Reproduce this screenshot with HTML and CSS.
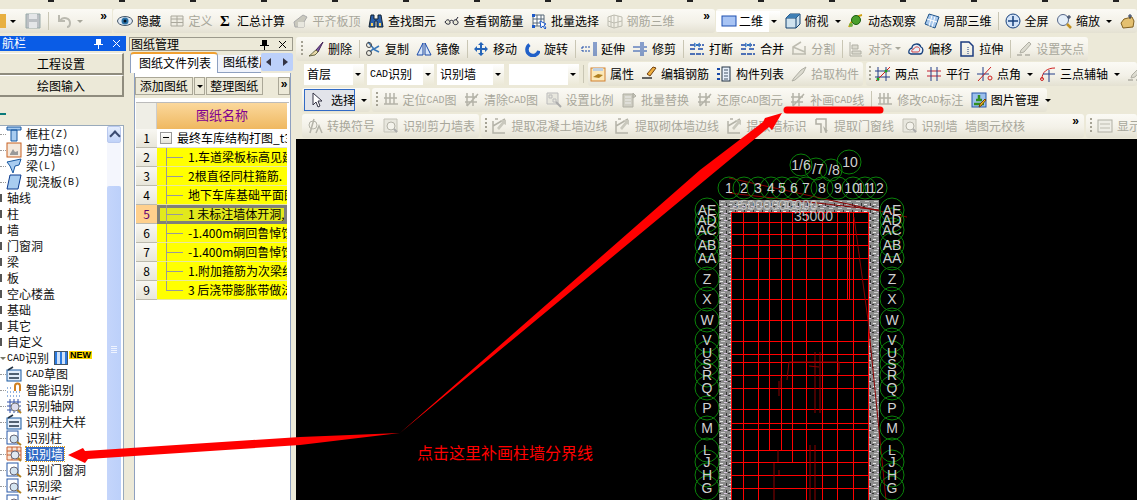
FILE: index.html
```html
<!DOCTYPE html>
<html lang="zh-CN">
<head>
    <meta charset="UTF-8">
    <title>CAD识别</title>
    <link rel="stylesheet" href="styles.css">
</head>
<body>
<svg class="defs" width="0" height="0">
    <symbol id="i-eye" viewBox="0 0 16 16"><ellipse cx="8" cy="8" rx="7.5" ry="4.5" fill="#dfe9f5" stroke="#456"/><circle cx="8" cy="8" r="3.5" fill="#2a72a8"/><circle cx="8" cy="8" r="1.5" fill="#012"/></symbol>
    <symbol id="i-table" viewBox="0 0 16 16"><path d="M2 3h12v10H2zM2 6h12M2 9.500h12M8 3v10" fill="#eeece2" stroke="#aaa89c"/></symbol>
    <symbol id="i-mech" viewBox="0 0 16 16"><path d="M1 9l9-7 4 2-3 5v5H2z" fill="#c9c8bd" stroke="#aaa"/><path d="M5 9h6v5H5z" fill="#e8e7de"/></symbol>
    <symbol id="i-bino" viewBox="0 0 16 16"><path d="M3 2h3v4h4V2h3l2 12H9V8H7v6H1z" fill="#2b5fa8" stroke="#123"/><path d="M3 10h2v3H3zM11 10h2v3h-2z" fill="#f6d060"/></symbol>
    <symbol id="i-glass" viewBox="0 0 16 16"><path d="M1 9c2-3 4-3 5 0s-4 3-5 0zM9 9c1-3 4-3 5 0s-5 4-5 0zM6 8c1-1 2-1 3 0M12 7l2-3" fill="#e8e8d8" stroke="#223"/></symbol>
    <symbol id="i-batch" viewBox="0 0 16 16"><path d="M2 2h11v11H2zM2 6h11M2 10h11M6 2v11M10 2v11" fill="#fff" stroke="#567" /><path d="M1 1h3v3H1zM1 12h3v3H1z" fill="#1c58c8"/><path d="M9 8l6 3-2 1 2 3-1 1-2-3-2 2z" fill="#fff" stroke="#1c58c8"/></symbol>
    <symbol id="i-cage" viewBox="0 0 16 16"><path d="M1 4l6-2 8 2v9l-8 2-6-2zM7 2v13M1 8l6 2 8-2M4 3v11M11 3v11" fill="none" stroke="#bdbcb0"/></symbol>
    <symbol id="i-rect" viewBox="0 0 16 16"><rect x="1" y="3" width="14" height="10" fill="#a8c4f4" stroke="#1c4fb0"/></symbol>
    <symbol id="i-cube" viewBox="0 0 16 16"><path d="M1 5l4-4h10v10l-4 4H1z" fill="#cfe2ee" stroke="#12406e"/><path d="M1 5h10v10M11 5l4-4" fill="none" stroke="#12406e"/><path d="M5 1h10L11 5H1z" fill="#3f7fb4"/></symbol>
    <symbol id="i-orbit" viewBox="0 0 16 16"><path d="M1 14c2-6 7-11 13-12" fill="none" stroke="#d0a010" stroke-width="2"/><circle cx="8" cy="7" r="4.500" fill="#4aa02c" stroke="#1c5c10"/><circle cx="3" cy="12" r="2" fill="#70b040"/></symbol>
    <symbol id="i-local" viewBox="0 0 16 16"><path d="M5 1l10 3-4 11L1 11z" fill="#a8c8ec" stroke="#1c5088"/><path d="M3 6l10 3M8 2.500L5 13M11 3.500L8 14" stroke="#fff"/></symbol>
    <symbol id="i-full" viewBox="0 0 16 16"><circle cx="8" cy="8" r="7" fill="#d4e4f8" stroke="#17407c"/><path d="M8 3v10M3 8h10" stroke="#17407c" stroke-width="1.500"/></symbol>
    <symbol id="i-zoom" viewBox="0 0 16 16"><circle cx="7" cy="7" r="5.500" fill="#e4eef8" stroke="#568"/><path d="M11 11l4 4" stroke="#c09020" stroke-width="2.500"/><path d="M13 2v4M11 4h4" stroke="#235"/></symbol>
    <symbol id="i-hand" viewBox="0 0 16 16"><path d="M3 15l-2-5 3-4 8-2 2 4-1 6z" fill="#e4c070" stroke="#806020"/><path d="M10 1v5M8 3h4" stroke="#235"/></symbol>
    <symbol id="i-brush" viewBox="0 0 16 16"><path d="M15 1l-7 8 2 2z" fill="#7a5aa8" stroke="#425"/><path d="M8 9l2 2-3 3-6 1c3-2 4-4 7-6z" fill="#e8d8a8" stroke="#664"/></symbol>
    <symbol id="i-copy" viewBox="0 0 16 16"><path d="M3 1l6 7 5-3M14 11l-6-3-3 3" fill="none" stroke="#3a78b8" stroke-width="1.500"/><circle cx="4" cy="4" r="2.500" fill="none" stroke="#444"/><circle cx="4" cy="12" r="2.500" fill="none" stroke="#444"/></symbol>
    <symbol id="i-mirror" viewBox="0 0 16 16"><path d="M7 2v12H1zM9 2v12h6z" fill="#d8e6f8" stroke="#1848a8"/></symbol>
    <symbol id="i-move" viewBox="0 0 16 16"><path d="M8 1l3 3H9v3h3V5l3 3-3 3V9H9v3h2l-3 3-3-3h2V9H4v2L1 8l3-3v2h3V4H5z" fill="#2464b8"/></symbol>
    <symbol id="i-rotate" viewBox="0 0 16 16"><path d="M13 3a6 6 0 1 1-10 5" fill="none" stroke="#2060c8" stroke-width="3.500" transform="rotate(60 8 8)"/></symbol>
    <symbol id="i-extend" viewBox="0 0 16 16"><path d="M13 1v14M15 1v14" stroke="#1848a8"/><path d="M1 6h9M1 10h9M1 6v4" stroke="#1848a8" stroke-dasharray="2 1"/></symbol>
    <symbol id="i-trim" viewBox="0 0 16 16"><path d="M9 1v14M11 1v14" stroke="#1848a8"/><path d="M1 6h7M1 10h7M12 6h3M12 10h3" stroke="#1848a8"/></symbol>
    <symbol id="i-break" viewBox="0 0 16 16"><path d="M1 4h14M1 8h6M9 8h6M1 13h14" stroke="#1848a8" stroke-width="1.500" stroke-dasharray="5 1"/><path d="M5 2l3 2-3 2M11 2L8 4l3 2" fill="none" stroke="#2a78c8"/></symbol>
    <symbol id="i-split" viewBox="0 0 16 16"><path d="M1 13h14M2 13V6l8-5M14 13V5M2 6l12 5" fill="none" stroke="#bdbcb0" stroke-width="1.500"/></symbol>
    <symbol id="i-alignl" viewBox="0 0 16 16"><path d="M2 1v14M2 15h12M4 4h6v4H4zM4 10h9v3H4z" fill="#dcdbd0" stroke="#b0afa4"/></symbol>
    <symbol id="i-offset" viewBox="0 0 16 16"><path d="M1 12c-1-4 3-5 3-5 0-4 7-6 9-1 3 1 2 7-1 7H3z" fill="#e8f0f8" stroke="#17407c" stroke-width="1.300"/><path d="M4 11c-1-2 1-3 2-3 0-2 4-3 5-1 1 0 1 4-1 4z" fill="none" stroke="#d04040"/></symbol>
    <symbol id="i-stretch" viewBox="0 0 16 16"><path d="M2 1h8l4 4v10H2z" fill="none" stroke="#1c3c80" stroke-width="1.500"/><path d="M9 6v7" stroke="#1c3c80" stroke-dasharray="1 1"/></symbol>
    <symbol id="i-setgrip" viewBox="0 0 16 16"><path d="M1 14h5M9 14h5" stroke="#b0afa4" stroke-width="1.500"/><path d="M13 1l2 2-7 8-4 1 1-3z" fill="#dcdbd0" stroke="#b0afa4"/></symbol>
    <symbol id="i-prop" viewBox="0 0 16 16"><rect x="1" y="2" width="14" height="13" fill="#fbe8b8" stroke="#d08030"/><path d="M3 2h10v3H3z" fill="#c0d0e0"/><path d="M3 11l5-3 5 1-4 3z" fill="#b08020"/></symbol>
    <symbol id="i-pen" viewBox="0 0 16 16"><path d="M15 2l-3-1-6 7 3 2z" fill="#f0b040" stroke="#704010"/><path d="M1 12h10" stroke="#333" stroke-width="1.500"/></symbol>
    <symbol id="i-list" viewBox="0 0 16 16"><rect x="6" y="1" width="8" height="14" fill="#e8f0fa" stroke="#234"/><path d="M8 4h4M8 7h4M8 10h4M8 13h4" stroke="#456"/><path d="M1 3h3M1 8h3M1 13h3" stroke="#1848a8" stroke-width="2"/></symbol>
    <symbol id="i-pick" viewBox="0 0 16 16"><path d="M15 1l-5 3-7 8-2 3 3-1 8-7z" fill="#dcdbd0" stroke="#b0afa4"/></symbol>
    <symbol id="i-twopt" viewBox="0 0 16 16"><path d="M3 1v14M11 1v14M0 5h15M0 11h15" stroke="#223c88"/><path d="M1 15L15 1" stroke="#d02020"/><circle cx="3" cy="13" r="1.500" fill="#20a020"/><circle cx="11" cy="5" r="1.500" fill="#20a020"/></symbol>
    <symbol id="i-para" viewBox="0 0 16 16"><path d="M1 5h14M1 10h14" stroke="#c02030"/><path d="M5 1v14M11 1v14" stroke="#223c88"/></symbol>
    <symbol id="i-angle" viewBox="0 0 16 16"><path d="M6 1v14M0 8h12" stroke="#223c88"/><path d="M1 15L14 1" stroke="#d02020"/><circle cx="13" cy="12" r="2" fill="none" stroke="#d02020"/></symbol>
    <symbol id="i-arc" viewBox="0 0 16 16"><path d="M2 13C2 6 7 2 15 2" fill="none" stroke="#d02020"/><path d="M9 4v12M3 8h12" stroke="#223c88"/><circle cx="2" cy="13" r="1.500" fill="none" stroke="#d02020"/></symbol>
    <symbol id="i-cursor" viewBox="0 0 16 16"><path d="M4 1v12l3-3 2 5 2-1-2-5h4z" fill="#fff" stroke="#334"/></symbol>
    <symbol id="i-cadgrid" viewBox="0 0 16 16"><path d="M3 1v11M7 1v11M11 1v11M1 12h14M1 6h13" stroke="#b4b3a8" stroke-width="1.500" fill="none"/></symbol>
    <symbol id="i-cadx" viewBox="0 0 16 16"><path d="M3 1v13M9 1v13M1 5h12M1 10h12M3 14L14 2" stroke="#b4b3a8" stroke-width="1.500" fill="none"/></symbol>
    <symbol id="i-scale" viewBox="0 0 16 16"><path d="M1 1h11v11H1zM3 3h3v3H3zM7 7h3v3H7z" fill="#e8e7de" stroke="#bbb"/><path d="M10 10l5 5" stroke="#aaa" stroke-width="2"/></symbol>
    <symbol id="i-doc" viewBox="0 0 16 16"><path d="M2 2h10v13H2zM12 1l3 3-3 2z" fill="#cfcec3" stroke="#b0afa4"/><path d="M4 5h6M4 8h6M4 11h6" stroke="#eee"/></symbol>
    <symbol id="i-pic" viewBox="0 0 16 16"><rect x="1" y="1" width="14" height="14" fill="#9cc0ec" stroke="#2858a8"/><path d="M8 3v5M5 8h6M3 12h10" stroke="#309020" stroke-width="2.500"/><path d="M15 8l-5 6 -2 1 1-3 5-5z" fill="#f0c020" stroke="#704010"/></symbol>
    <symbol id="i-symb" viewBox="0 0 16 16"><circle cx="6" cy="7" r="4" fill="none" stroke="#b4b3a8"/><path d="M7 1L3 15M9 15l3-7 3 7" stroke="#b4b3a8" fill="none" stroke-width="1.500"/></symbol>
    <symbol id="i-findtbl" viewBox="0 0 16 16"><path d="M1 1h13v13H1z" fill="#e8e7de" stroke="#c4c3b8"/><circle cx="8" cy="8" r="4" fill="#f4f3ec" stroke="#b4b3a8"/><path d="M11 11l3 3" stroke="#aaa" stroke-width="2"/></symbol>
    <symbol id="i-extract" viewBox="0 0 16 16"><path d="M1 3v12h12M3 1h3M1 8l12-7" fill="none" stroke="#b4b3a8" stroke-width="1.500"/><path d="M8 2h6v5l-2-1-5 6-2-2 5-6z" fill="#c9c8bd"/></symbol>
    <symbol id="i-win" viewBox="0 0 16 16"><path d="M2 1h10v14M2 1v5h5v9" fill="none" stroke="#b0afa4" stroke-width="1.500"/><path d="M9 8l5 5-3 1z" fill="#b0afa4"/></symbol>
    <symbol id="i-cadbox" viewBox="0 0 16 16"><rect x="1" y="2" width="14" height="12" fill="#efeee6" stroke="#b0afa4"/><path d="M3 6h10M3 10h10" stroke="#bdbcb0"/></symbol>
    <symbol id="i-floppy" viewBox="0 0 16 16"><path d="M1 1h14v14H1z" fill="#bcc0c4" stroke="#9aa"/><path d="M4 1h8v5H4zM4 9h8v6H4z" fill="#e4e6e8"/></symbol>
    <symbol id="i-undo" viewBox="0 0 16 16"><path d="M2 2v6h6M3 8c3-5 10-3 10 2 0 2-1 4-3 4" fill="none" stroke="#bbbab0" stroke-width="2"/></symbol>
    <symbol id="t-col" viewBox="0 0 16 16"><path d="M1 1h14v3H1zM5 4h6v11H5z" fill="#a8ccf0" stroke="#1858a0"/></symbol>
    <symbol id="t-wall" viewBox="0 0 16 16"><rect x="1" y="1" width="14" height="14" fill="#f4e8dc" stroke="#c86020"/><path d="M4 12l3-5 2 3 3-1v4H4z" fill="#999"/></symbol>
    <symbol id="t-beam" viewBox="0 0 16 16"><path d="M1 4l14-3-2 6-4 1-2 7-3-7z" fill="#a8ccf0" stroke="#1858a0"/></symbol>
    <symbol id="t-slab" viewBox="0 0 16 16"><path d="M4 1h11l-3 14H1z" fill="#a8ccf0" stroke="#0c3c90"/></symbol>
    <symbol id="t-cad" viewBox="0 0 16 16"><rect x="1" y="4" width="14" height="11" fill="#e4eefa" stroke="#1858a0"/><path d="M2 4l5-3M3 8h10M3 12h10" stroke="#234" stroke-width="1.500"/></symbol>
    <symbol id="t-magnet" viewBox="0 0 16 16"><path d="M9 9V4a2.500 2.500 0 0 1 5 0v5" fill="none" stroke="#d08020" stroke-width="2"/><path d="M1 6h6M1 10h14M1 14h14" stroke="#2868c0" stroke-dasharray="1 2"/></symbol>
    <symbol id="t-axis" viewBox="0 0 16 16"><path d="M1 4h14M1 8h14M1 12h14M4 1v14M8 1v14M12 1v14" stroke="#3050a8"/><circle cx="9" cy="9" r="4" fill="#dde" stroke="#777"/><path d="M12 12l3 3" stroke="#b08020" stroke-width="2"/></symbol>
    <symbol id="t-find" viewBox="0 0 16 16"><rect x="1" y="1" width="11" height="13" fill="#fff" stroke="#2858a8"/><circle cx="8" cy="9" r="4" fill="#d4e4f0" stroke="#667"/><path d="M11 12l4 3" stroke="#b08020" stroke-width="2"/></symbol>
    <symbol id="t-findw" viewBox="0 0 16 16"><path d="M1 1h14v13H1zM1 5h14M1 9h14M6 1v13M11 1v13" fill="#f8e4d4" stroke="#c86030"/><circle cx="9" cy="9" r="4" fill="#e0e8f0" stroke="#667"/><path d="M12 12l3 3" stroke="#b08020" stroke-width="2"/></symbol>
    <symbol id="i-left" viewBox="0 0 8 8"><path d="M6 0v8L1 4z" fill="#334"/></symbol>
    <symbol id="i-right" viewBox="0 0 8 8"><path d="M2 0v8l5-4z" fill="#334"/></symbol>
    <symbol id="i-pin" viewBox="0 0 9 11"><path d="M2 1h5v5h2v1H5v4H4V7H0V6h2z" fill="currentColor"/></symbol>
    <symbol id="i-close" viewBox="0 0 9 9"><path d="M1 1l7 7M8 1L1 8" stroke="currentColor" fill="none"/></symbol>
</svg>

<div class="app">
    <div class="menu-strip"></div>

    <div class="row row-top">
        <div class="band band-first">
            <i class="chip chip-orange"></i><b class="dd"></b>
            <svg class="ic"><use href="#i-floppy"/></svg>
            <i class="sep"></i>
            <svg class="ic"><use href="#i-undo"/></svg><b class="dd off-dd"></b>
            <em class="more">»</em>
        </div>
        <div class="band band-view">
            <span class="tool"><svg class="ic"><use href="#i-eye"/></svg>隐藏</span>
            <span class="tool off"><svg class="ic"><use href="#i-table"/></svg>定义</span>
            <span class="tool"><span class="sigma">Σ</span>汇总计算</span>
            <span class="tool off"><svg class="ic"><use href="#i-mech"/></svg>平齐板顶</span>
            <span class="tool"><svg class="ic"><use href="#i-bino"/></svg>查找图元</span>
            <span class="tool"><svg class="ic"><use href="#i-glass"/></svg>查看钢筋量</span>
            <span class="tool"><svg class="ic"><use href="#i-batch"/></svg>批量选择</span>
            <span class="tool off"><svg class="ic"><use href="#i-cage"/></svg>钢筋三维</span>
            <em class="more">»</em>
        </div>
        <div class="band band-3d">
            <span class="combo combo-2d"><svg class="ic"><use href="#i-rect"/></svg>二维<b class="dd"></b></span>
            <span class="tool"><svg class="ic"><use href="#i-cube"/></svg>俯视<b class="dd"></b></span>
            <span class="tool"><svg class="ic"><use href="#i-orbit"/></svg>动态观察</span>
            <span class="tool"><svg class="ic"><use href="#i-local"/></svg>局部三维</span>
            <i class="sep"></i>
            <span class="tool"><svg class="ic"><use href="#i-full"/></svg>全屏</span>
            <span class="tool"><svg class="ic"><use href="#i-zoom"/></svg>缩放<b class="dd"></b></span>
            <svg class="ic"><use href="#i-hand"/></svg>
        </div>
    </div>

    <div class="main">
        <aside class="nav-panel">
            <div class="nav-title"><span class="nav-title-text">航栏</span><svg class="pin"><use href="#i-pin"/></svg><svg class="close"><use href="#i-close"/></svg></div>
            <button class="nav-btn nav-btn-first">工程设置</button>
            <button class="nav-btn">绘图输入</button>
            <div class="nav-gap"><i class="teal"></i></div>
            <div class="tree-box">
                <ul class="tree">
                    <li class="leaf"><svg class="ic"><use href="#t-col"/></svg>框柱<span class="lat">(Z)</span></li>
                    <li class="leaf"><svg class="ic"><use href="#t-wall"/></svg>剪力墙<span class="lat">(Q)</span></li>
                    <li class="leaf"><svg class="ic"><use href="#t-beam"/></svg>梁<span class="lat">(L)</span></li>
                    <li class="leaf"><svg class="ic"><use href="#t-slab"/></svg>现浇板<span class="lat">(B)</span></li>
                    <li class="node">轴线</li>
                    <li class="node">柱</li>
                    <li class="node">墙</li>
                    <li class="node">门窗洞</li>
                    <li class="node">梁</li>
                    <li class="node">板</li>
                    <li class="node">空心楼盖</li>
                    <li class="node">基础</li>
                    <li class="node">其它</li>
                    <li class="node">自定义</li>
                    <li class="node node-open"><span class="lat">CAD</span>识别<i class="new-box"></i><span class="new-tag">NEW</span></li>
                    <li class="leaf"><svg class="ic"><use href="#t-cad"/></svg><span class="lat">CAD</span>草图</li>
                    <li class="leaf"><svg class="ic"><use href="#t-magnet"/></svg>智能识别</li>
                    <li class="leaf"><svg class="ic"><use href="#t-axis"/></svg>识别轴网</li>
                    <li class="leaf"><svg class="ic"><use href="#t-cad"/></svg>识别柱大样</li>
                    <li class="leaf"><svg class="ic"><use href="#t-find"/></svg>识别柱</li>
                    <li class="leaf"><svg class="ic"><use href="#t-findw"/></svg><span class="picked">识别墙</span></li>
                    <li class="leaf"><svg class="ic"><use href="#t-find"/></svg>识别门窗洞</li>
                    <li class="leaf"><svg class="ic"><use href="#t-find"/></svg>识别梁</li>
                    <li class="leaf"><svg class="ic"><use href="#t-find"/></svg>识别板</li>
                </ul>
                <div class="vscroll">
                    <span class="vscroll-up"></span>
                    <span class="vscroll-thumb"><i></i></span>
                </div>
            </div>
        </aside>

        <section class="sheet-panel">
            <div class="sheet-title">图纸管理<svg class="pin"><use href="#i-pin"/></svg><svg class="close"><use href="#i-close"/></svg></div>
            <div class="tabs">
                <span class="tab tab-on">图纸文件列表</span>
                <span class="tab">图纸楼层</span>
                <span class="tab-arrows"><svg><use href="#i-left"/></svg><svg><use href="#i-right"/></svg></span>
            </div>
            <div class="tab-body">
                <div class="sheet-tools">
                    <span class="flat">添加图纸</span><span class="flat flat-dd"><b class="dd"></b></span><span class="flat">整理图纸</span>
                    <span class="flat flat-more">»</span>
                </div>
                <div class="grid">
                    <div class="gh-num"></div><div class="gh-name">图纸名称</div>
                    <div class="num">1</div><div class="cell cell-root"><i class="minus"></i>最终车库结构打图_t3</div>
                    <div class="num">2</div><div class="cell cell-y">1.车道梁板标高见建</div>
                    <div class="num">3</div><div class="cell cell-y">2根直径同柱箍筋.</div>
                    <div class="num">4</div><div class="cell cell-y">地下车库基础平面图</div>
                    <div class="num num-on">5</div><div class="cell cell-y cell-on">1 未标注墙体开洞,</div>
                    <div class="num">6</div><div class="cell cell-y">-1.400m硐回鲁悼饪</div>
                    <div class="num">7</div><div class="cell cell-y">-1.400m硐回鲁悼饪</div>
                    <div class="num">8</div><div class="cell cell-y">1.附加箍筋为次梁组</div>
                    <div class="num">9</div><div class="cell cell-y cell-last">3 后浇带膨胀带做法</div>
                </div>
            </div>
        </section>

        <div class="work">
            <div class="row row-edit">
                <div class="band band-edit">
                    <i class="grip"></i>
                    <span class="tool"><svg class="ic"><use href="#i-brush"/></svg>删除</span><i class="sep"></i>
                    <span class="tool"><svg class="ic"><use href="#i-copy"/></svg>复制</span>
                    <span class="tool"><svg class="ic"><use href="#i-mirror"/></svg>镜像</span><i class="sep"></i>
                    <span class="tool"><svg class="ic"><use href="#i-move"/></svg>移动</span>
                    <span class="tool"><svg class="ic"><use href="#i-rotate"/></svg>旋转</span><i class="sep"></i>
                    <span class="tool"><svg class="ic"><use href="#i-extend"/></svg>延伸</span>
                    <span class="tool"><svg class="ic"><use href="#i-trim"/></svg>修剪</span><i class="sep"></i>
                    <span class="tool"><svg class="ic"><use href="#i-break"/></svg>打断</span>
                    <span class="tool"><svg class="ic"><use href="#i-break"/></svg>合并</span>
                    <span class="tool off"><svg class="ic"><use href="#i-split"/></svg>分割</span><i class="sep"></i>
                    <span class="tool off"><svg class="ic"><use href="#i-alignl"/></svg>对齐<b class="dd off-dd"></b></span>
                    <span class="tool"><svg class="ic"><use href="#i-offset"/></svg>偏移</span>
                    <span class="tool"><svg class="ic"><use href="#i-stretch"/></svg>拉伸</span><i class="sep"></i>
                    <span class="tool off"><svg class="ic"><use href="#i-setgrip"/></svg>设置夹点</span>
                </div>
            </div>
            <div class="row row-combos">
                <span class="combo combo-floor">首层<b class="dd"></b></span>
                <span class="combo combo-kind"><span class="lat">CAD</span>识别<b class="dd"></b></span>
                <span class="combo combo-kind">识别墙<b class="dd"></b></span>
                <span class="combo combo-blank"><b class="dd"></b></span>
                <i class="sep"></i>
                <div class="band band-prop">
                    <span class="tool"><svg class="ic"><use href="#i-prop"/></svg>属性</span>
                    <span class="tool"><svg class="ic"><use href="#i-pen"/></svg>编辑钢筋</span>
                    <span class="tool"><svg class="ic"><use href="#i-list"/></svg>构件列表</span>
                    <span class="tool off"><svg class="ic"><use href="#i-pick"/></svg>拾取构件</span>
                </div>
                <div class="band band-axis">
                    <i class="grip"></i>
                    <span class="tool"><svg class="ic"><use href="#i-twopt"/></svg>两点</span>
                    <span class="tool"><svg class="ic"><use href="#i-para"/></svg>平行</span>
                    <span class="tool"><svg class="ic"><use href="#i-angle"/></svg>点角<b class="dd"></b></span>
                    <span class="tool"><svg class="ic"><use href="#i-arc"/></svg>三点辅轴<b class="dd"></b></span>
                    <svg class="ic"><use href="#i-setgrip"/></svg>
                </div>
            </div>
            <div class="row">
                <div class="band band-select">
                    <span class="select-btn"><svg class="ic"><use href="#i-cursor"/></svg>选择</span><b class="dd"></b>
                </div>
                <div class="band band-cad">
                    <i class="grip"></i>
                    <span class="tool off"><svg class="ic"><use href="#i-cadgrid"/></svg>定位<span class="lat">CAD</span>图</span>
                    <span class="tool off"><svg class="ic"><use href="#i-cadx"/></svg>清除<span class="lat">CAD</span>图</span>
                    <span class="tool off"><svg class="ic"><use href="#i-scale"/></svg>设置比例</span>
                    <span class="tool off"><svg class="ic"><use href="#i-doc"/></svg>批量替换</span>
                    <span class="tool off"><svg class="ic"><use href="#i-cadx"/></svg>还原<span class="lat">CAD</span>图元</span>
                    <span class="tool off"><svg class="ic"><use href="#i-cadx"/></svg>补画<span class="lat">CAD</span>线</span><i class="sep"></i>
                    <span class="tool off"><svg class="ic"><use href="#i-cadgrid"/></svg>修改<span class="lat">CAD</span>标注</span>
                    <span class="tool"><svg class="ic"><use href="#i-pic"/></svg>图片管理<b class="dd"></b></span>
                </div>
            </div>
            <div class="row">
                <div class="band band-symb">
                    <span class="tool off"><svg class="ic"><use href="#i-symb"/></svg>转换符号</span>
                    <span class="tool off"><svg class="ic"><use href="#i-findtbl"/></svg>识别剪力墙表</span>
                </div>
                <div class="band band-extract">
                    <i class="grip"></i>
                    <span class="tool off"><svg class="ic"><use href="#i-extract"/></svg>提取混凝土墙边线</span>
                    <span class="tool off"><svg class="ic"><use href="#i-extract"/></svg>提取砌体墙边线</span>
                    <span class="tool off"><svg class="ic"><use href="#i-extract"/></svg>提取墙标识</span>
                    <span class="tool off"><svg class="ic"><use href="#i-win"/></svg>提取门窗线</span>
                    <span class="tool off"><svg class="ic"><use href="#i-findtbl"/></svg>识别墙</span>
                    <span class="tool off">墙图元校核</span>
                    <em class="more">»</em>
                </div>
                <div class="band band-show">
                    <i class="grip"></i>
                    <span class="tool off"><svg class="ic"><use href="#i-cadbox"/></svg>显示</span>
                </div>
            </div>

            <div class="canvas">
                <svg class="drawing" viewBox="297 139 840 361">
                    <defs>
                        <pattern id="wallTex" width="9" height="7" patternUnits="userSpaceOnUse">
                            <rect width="9" height="7" fill="#8c8c8c"/>
                            <rect x="1" y="1" width="3" height="1" fill="#e8e8e8"/>
                            <rect x="5" y="3" width="3" height="1" fill="#d8c8e0"/>
                            <rect x="2" y="5" width="4" height="1" fill="#ccc"/>
                            <rect x="7" y="0" width="1" height="3" fill="#333"/>
                            <rect x="0" y="3" width="2" height="1" fill="#333"/>
                        </pattern>
                    </defs>
                    <rect x="720" y="200" width="12" height="300" fill="url(#wallTex)"/>
                    <rect x="870" y="200" width="10" height="300" fill="url(#wallTex)"/>
                    <rect x="720" y="200" width="160" height="12" fill="url(#wallTex)"/>
                    <g class="grid-lines">
                        <path d="M732 212V500M744 212V500M759 212V500M770 212V450M782 212V450M793 212V462M807 212V500M823 212V500M838 212V500M854 212V500M869 212V500"/>
                        <path d="M732 212H869M732 222H869M732 234H869M732 245H869M732 258H869M732 279H869M732 299H869M732 320H869M732 341H869M732 354H869M732 362H869M732 375H869M732 388H869M732 409H869M732 423H869M732 429H869M732 450H869M732 462H869M732 475H869M732 488H869"/>
                        <path d="M848 212V299M850 212V299"/>
                    </g>
                    <g class="dark-lines">
                        <path d="M730 178L908 217M730 193L880 210M855 217L869 320L887 500"/>
                        <path d="M816 352V413M821 352V413M811 445V500M816 445V500M775 463V500M779 450V462M780 470V475"/>
                        <path d="M780 381V396M790 362H840M790 362L788 380M810 366L820 367M840 362V373M782 378V388"/>
                    </g>
                    <text class="dim" x="733" y="210">35000000000</text>
                    <text class="dim" x="795" y="221">35000</text>
                    <g id="axisCol" class="axis">
                        <circle cx="708" cy="210" r="12"/><circle cx="708" cy="220" r="12"/><circle cx="708" cy="230" r="12"/><circle cx="708" cy="245" r="12"/><circle cx="708" cy="258" r="12"/>
                        <circle cx="708" cy="279" r="12"/><circle cx="708" cy="299" r="12"/><circle cx="708" cy="320" r="12"/><circle cx="708" cy="340" r="12"/><circle cx="708" cy="353" r="12"/>
                        <circle cx="708" cy="364" r="12"/><circle cx="708" cy="375" r="12"/><circle cx="708" cy="388" r="12"/><circle cx="708" cy="408" r="12"/><circle cx="708" cy="428" r="12"/>
                        <circle cx="708" cy="450" r="12"/><circle cx="708" cy="462" r="12"/><circle cx="708" cy="475" r="12"/><circle cx="708" cy="488" r="12"/>
                        <text x="708" y="215">AE</text><text x="708" y="225">AD</text><text x="708" y="235">AC</text><text x="708" y="250">AB</text><text x="708" y="263">AA</text>
                        <text x="708" y="284">Z</text><text x="708" y="304">X</text><text x="708" y="325">W</text><text x="708" y="345">V</text><text x="708" y="358">U</text>
                        <text x="708" y="369">S</text><text x="708" y="380">R</text><text x="708" y="393">Q</text><text x="708" y="413">P</text><text x="708" y="433">M</text>
                        <text x="708" y="455">L</text><text x="708" y="467">J</text><text x="708" y="480">H</text><text x="708" y="493">G</text>
                    </g>
                    <use href="#axisCol" x="185"/>
                    <g class="axis">
                        <circle cx="730" cy="188" r="11"/><circle cx="745" cy="188" r="11"/><circle cx="759" cy="188" r="11"/><circle cx="772" cy="188" r="11"/><circle cx="783" cy="188" r="11"/><circle cx="795" cy="188" r="11"/>
                        <circle cx="807" cy="188" r="11"/><circle cx="823" cy="188" r="11"/><circle cx="839" cy="188" r="11"/><circle cx="854" cy="188" r="11"/><circle cx="866" cy="188" r="11"/><circle cx="877" cy="188" r="11"/>
                        <circle cx="802" cy="165" r="11"/><circle cx="817" cy="169" r="11"/><circle cx="832" cy="170" r="11"/><circle cx="850" cy="162" r="12"/>
                        <text x="730" y="193">1</text><text x="745" y="193">2</text><text x="759" y="193">3</text><text x="772" y="193">4</text><text x="783" y="193">5</text><text x="795" y="193">6</text>
                        <text x="807" y="193">7</text><text x="823" y="193">8</text><text x="839" y="193">9</text><text x="853" y="193">10</text><text x="865" y="193">11</text><text x="877" y="193">12</text>
                        <text x="802" y="170">1/6</text><text x="819" y="174">/7</text><text x="835" y="175">/8</text><text x="851" y="167">10</text>
                    </g>
                </svg>
            </div>
        </div>
    </div>
</div>

<svg class="marks" viewBox="0 0 1137 500">
    <path d="M400 433L700 170L763 122L765 118L782 113L772 130L769 127Z"/>
    <path d="M400 433L300 437L85 451L83 448L68 455L85 463L88 459L300 445Z"/>
    <path class="streak" d="M787 110H880"/>
</svg>
<div class="note">点击这里补画柱墙分界线</div>
</body>
</html>
```

FILE: styles.css
```css
* {
    margin: 0;
    padding: 0;
    box-sizing: border-box;
}

body {
    width: 1137px;
    height: 500px;
    overflow: hidden;
    position: relative;
    background: #ece9d8;
    color: #000;
    font-family: "Noto Sans CJK SC", sans-serif;
    font-size: 12px;
    line-height: 14px;
}

i, em, b {
    font-style: normal;
    font-weight: normal;
}

.defs {
    position: absolute;
}

.app {
    height: 500px;
    display: flex;
    flex-direction: column;
}

.menu-strip {
    height: 9px;
    background:
        repeating-linear-gradient(90deg, transparent 0 48px, #222 48px 54px, transparent 54px 71px) top left / 100% 2px no-repeat,
        #ece9d8;
}

/* toolbars */
.row {
    height: 26px;
    display: flex;
    align-items: center;
    gap: 2px;
    white-space: nowrap;
    overflow: hidden;
}

.row-top {
    height: 27px;
    flex: none;
    gap: 0;
    align-items: flex-start;
}

.row-edit {
    height: 25px;
}

.band {
    height: 24px;
    display: flex;
    align-items: center;
    gap: 8px;
    border-radius: 3px;
    background: linear-gradient(#fbfaf5, #f3f1e8 55%, #e4e1d2);
    position: relative;
    flex: none;
}

.band-first {
    width: 112px;
    gap: 0;
    border-radius: 0;
}

.band-view {
    width: 602px;
    margin-left: 1px;
    padding-left: 4px;
    gap: 7.5px;
}

.band-3d {
    flex: 1;
    margin-left: 1px;
    overflow: hidden;
    gap: 7.5px;
}

.band-edit {
    width: 792px;
    padding-left: 5px;
    gap: 7px;
}

.band-edit .grip {
    margin-right: -2px;
}

.band-edit .sep {
    margin: 0 -2px 0 0;
}

.band-edit .dd {
    margin-left: 3px;
}

.band-prop {
    width: 275px;
    padding-left: 2px;
    gap: 7px;
}

.band-axis {
    flex: 1;
    padding-left: 3px;
    overflow: hidden;
    gap: 7px;
}

.band-select {
    width: 68px;
    margin-left: 6px;
    padding-left: 2px;
    gap: 2px;
}

.band-cad {
    width: 675px;
    padding-left: 4px;
    gap: 7.5px;
}

.band-symb {
    width: 177px;
    margin-left: 6px;
    padding-left: 5px;
}

.band-extract {
    width: 603px;
    padding-left: 4px;
    gap: 7.5px;
}

.band-show {
    flex: 1;
    padding-left: 4px;
    overflow: hidden;
}

.tool {
    display: flex;
    align-items: center;
}

.tool .ic {
    margin-right: 4px;
}

.off {
    color: #a8a79b;
}

.ic {
    width: 16px;
    height: 16px;
    flex: none;
}

.sigma {
    width: 17px;
    font: bold 15px "Liberation Serif", serif;
}

.lat {
    font-family: "Liberation Mono", monospace;
    font-size: 10px;
    margin-top: 2px;
}

.dd {
    width: 0;
    height: 0;
    margin: 0 0 0 6px;
    border: 3px solid transparent;
    border-top: 3px solid #000;
    border-bottom: 0;
    flex: none;
}

.off-dd {
    border-top-color: #a8a79b;
}

.sep {
    width: 1px;
    height: 18px;
    margin: 0 -2px 0 -1px;
    background: #c9c6b4;
    flex: none;
}

.grip {
    width: 2px;
    height: 16px;
    margin-right: -3px;
    flex: none;
    background: repeating-linear-gradient(#a5a294 0 2px, transparent 2px 4px);
}

.more {
    position: absolute;
    top: 0;
    right: 5px;
    font: bold 12px "Liberation Sans", sans-serif;
}

.band-first .chip {
    width: 6px;
    height: 14px;
    background: #e8b040;
}

.band-first .dd {
    margin: 0 4px;
}

.band-first .ic {
    margin-left: 5px;
}

.band-first .sep {
    margin-left: 7px;
    margin-right: 3px;
}

.combo {
    height: 21px;
    display: flex;
    align-items: center;
    background: #fff;
    padding-left: 3px;
    position: relative;
    flex: none;
}

.combo .dd {
    position: absolute;
    right: 0;
    top: 0;
    width: 11px;
    height: 21px;
    margin: 0;
    border: 0;
    background: linear-gradient(#fff, #ece9d8);
}

.combo .dd::after {
    content: "";
    position: absolute;
    left: 2px;
    top: 9px;
    border: 3px solid transparent;
    border-top-color: #000;
    border-bottom: 0;
}

.combo-2d {
    width: 64px;
    gap: 2px;
    margin-right: -3px;
    padding-left: 5px;
}

.row-combos {
    gap: 3px;
}

.row-combos .sep {
    margin: 0 1px;
}

.combo-floor {
    width: 60px;
    margin-left: 8px;
}

.combo-kind {
    width: 67px;
}

.combo-blank {
    width: 70px;
    margin-left: 2px;
}

.select-btn {
    width: 51px;
    height: 22px;
    display: flex;
    align-items: center;
    padding-left: 4px;
    border: 1px solid #316ac5;
    background: #e2e4ea;
}

.select-btn .ic {
    margin-right: 6px;
}

.band-select .dd {
    margin-left: 4px;
}

/* left panels */
.main {
    flex: 1;
    min-height: 0;
    display: grid;
    grid-template-columns: 129px 167px 1fr;
}

.nav-panel {
    width: 126px;
    display: flex;
    flex-direction: column;
}

.nav-title {
    height: 15px;
    padding-left: 2px;
    background: #0a5ce6;
    color: #fff;
    position: relative;
}

.pin, .close {
    position: absolute;
    top: 2px;
    color: inherit;
}

.pin {
    right: 23px;
    width: 9px;
    height: 11px;
}

.close {
    right: 5px;
    top: 3px;
    width: 9px;
    height: 9px;
}

.nav-btn {
    height: 22px;
    border: 0;
    border-right: 2px solid #8f8c7e;
    border-bottom: 2px solid #8f8c7e;
    border-top: 1px solid #fff;
    background: #ece9d8;
    font: inherit;
    margin-right: 2px;
}

.nav-btn-first {
    margin-top: 2px;
}

.nav-gap {
    height: 28px;
    position: relative;
}

.teal {
    position: absolute;
    left: 0;
    top: 16px;
    width: 6px;
    height: 2px;
    background: #0a7a7a;
}

.tree-box {
    flex: 1;
    min-height: 0;
    margin-right: 2px;
    background: #fff;
    border-top: 1px solid #9ab;
    border-right: 1px solid #9ab;
    position: relative;
    overflow: hidden;
}

.tree {
    list-style: none;
}

.tree li {
    height: 16px;
    display: flex;
    align-items: center;
    color: #111;
    white-space: nowrap;
}

.leaf {
    padding-left: 6px;
}

.leaf .ic {
    margin-right: 4px;
}

.leaf::before {
    content: "";
    position: absolute;
    left: 0;
    width: 6px;
    border-top: 1px dotted #999;
}

.node {
    padding-left: 7px;
}

.node::before {
    content: "";
    position: absolute;
    left: 0;
    width: 2px;
    height: 8px;
    background: #555;
}

.node-open::before {
    width: 0;
    height: 0;
    background: none;
    border: 3px solid transparent;
    border-top-color: #776;
    border-bottom: 0;
}

.new-box {
    width: 14px;
    height: 14px;
    margin-left: 5px;
    background: repeating-linear-gradient(90deg, #2a7ae0 0 2px, #cfe2fa 2px 5px);
    border: 1px solid #456;
}

.new-tag {
    font: bold 9px "Liberation Sans", sans-serif;
    background: #ffd800;
    color: #000;
    margin: -7px 0 0 1px;
    padding: 0 1px;
    line-height: 8px;
    height: 8px;
}

.picked {
    display: block;
    padding: 0 1px;
    background: #316ac5;
    color: #fff;
    outline: 1px dotted #e0a020;
}

.vscroll {
    position: absolute;
    right: 2px;
    top: 0;
    bottom: 0;
    width: 14px;
    background: #f4f6fd;
    display: flex;
    flex-direction: column;
    gap: 43px;
}

.vscroll-up {
    height: 17px;
    flex: none;
    background: linear-gradient(#e4edfd, #c0d2f8);
    border: 1px solid #b8c8ee;
    border-radius: 2px;
    position: relative;
}

.vscroll-up::after {
    content: "";
    position: absolute;
    left: 3px;
    top: 5px;
    width: 6px;
    height: 6px;
    border: solid #3a4a70;
    border-width: 2px 0 0 2px;
    transform: rotate(45deg);
}

.vscroll-thumb {
    flex: 1;
    background: linear-gradient(90deg, #c4d5fb, #bcd0fa);
    border-radius: 2px;
    display: flex;
    justify-content: center;
    padding-top: 160px;
}

.vscroll-thumb i {
    width: 6px;
    height: 7px;
    background: repeating-linear-gradient(#eef3ff 0 1px, transparent 1px 2px);
}

.sheet-panel {
    width: 164px;
    display: flex;
    flex-direction: column;
    position: relative;
}

.sheet-title {
    height: 14px;
    margin-top: 1px;
    padding-left: 1px;
    border: 1px solid #9c9a8c;
    line-height: 12px;
    position: relative;
}

.sheet-title .pin {
    top: 1px;
}

.sheet-title .close {
    top: 2px;
}

.tabs {
    height: 21px;
    margin-top: 1px;
    display: flex;
    align-items: flex-end;
    padding-left: 1px;
}

.tab {
    width: 43px;
    height: 18px;
    padding-left: 5px;
    background: #f0f3fb;
    overflow: hidden;
    white-space: nowrap;
    border-bottom: 1px solid #8ea0c0;
}

.tab-on {
    width: 88px;
    height: 21px;
    padding: 2px 0 0 8px;
    background: #fff;
    border: 1px solid #8ea0c0;
    border-top: 2px solid #f0a030;
    border-bottom: 0;
    border-radius: 4px 4px 0 0;
}

.tab-arrows {
    width: 32px;
    height: 18px;
    display: flex;
    justify-content: space-around;
    align-items: center;
    background: #bcd0fa;
    border-radius: 2px;
    align-self: flex-start;
    margin-top: 1px;
}

.tab-arrows svg {
    width: 8px;
    height: 8px;
}

.tab-body {
    flex: 1;
    min-height: 0;
    margin: 0 2px 0 5px;
    padding: 4px 1px 0;
    border: 1px solid #8ea0c0;
    border-top: 0;
    background: #fff;
    position: relative;
}

.sheet-tools {
    height: 21px;
    display: flex;
    gap: 1px;
    margin: 0 -1px;
    padding-bottom: 2px;
    background: #ece9d8;
    position: relative;
}

.flat {
    width: 58px;
    height: 18px;
    line-height: 16px;
    text-align: center;
    border: 1px solid #aaa797;
}

.flat-dd {
    width: 11px;
    position: relative;
}

.flat-dd .dd {
    position: absolute;
    left: 0;
    top: 7px;
    margin: 0 2px;
}

.flat-more {
    width: 12px;
    margin-left: 14px;
    font: bold 12px/12px "Liberation Sans", sans-serif;
}

.grid {
    margin-top: 4px;
    display: grid;
    grid-template-columns: 21px 130px;
    grid-template-rows: 26px repeat(9, 19px);
    border-top: 1px solid #bbb;
}

.gh-num {
    background: #efeee6;
    border-right: 1px solid #ccc;
}

.gh-name {
    text-align: center;
    line-height: 24px;
    font-size: 13px;
    color: #800090;
    background: linear-gradient(#fbd89c, #efb860);
}

.num {
    background: linear-gradient(#f8f7f2, #e8e6da);
    border-bottom: 1px solid #bcbaae;
    text-align: center;
    line-height: 18px;
}

.num-on {
    background: #ffd08c;
    color: #600070;
}

.cell {
    white-space: nowrap;
    overflow: hidden;
    line-height: 17px;
    position: relative;
}

.cell-root {
    padding-left: 20px;
    border-bottom: 1px solid #ddd;
}

.minus {
    position: absolute;
    left: 3px;
    top: 3px;
    width: 12px;
    height: 12px;
    border: 1px solid #999;
    background: linear-gradient(#fff, #e4e2d8);
}

.minus::after {
    content: "";
    position: absolute;
    left: 2px;
    top: 4px;
    width: 6px;
    height: 1px;
    background: #000;
}

.cell-y {
    padding-left: 31px;
    background: #ff0;
    border-bottom: 1px solid #e8e8a0;
}

.cell-y::before {
    content: "";
    position: absolute;
    left: 9px;
    top: 0;
    bottom: 0;
    width: 1px;
    background: #999;
}

.cell-y::after {
    content: "";
    position: absolute;
    left: 9px;
    top: 9px;
    width: 17px;
    height: 1px;
    background: #999;
}

.cell-last::before {
    bottom: 9px;
}

.cell-on {
    background: #e2e81c;
    outline: 3px solid #808078;
    outline-offset: -3px;
}

/* drawing */
.work {
    display: flex;
    flex-direction: column;
    min-width: 0;
}

.canvas {
    flex: 1;
    min-height: 0;
    background: #000;
}

.drawing {
    display: block;
    width: 840px;
    height: 361px;
}

.grid-lines path {
    fill: none;
    stroke: #f00;
    stroke-width: 1;
    shape-rendering: crispEdges;
}

.dark-lines path {
    fill: none;
    stroke: #8c0000;
    stroke-width: 1;
}

.axis circle {
    fill: none;
    stroke: #0a800a;
}

.axis text {
    fill: #d0d0d0;
    font: 14px "Liberation Sans", sans-serif;
    text-anchor: middle;
}

.dim {
    fill: #bcbcbc;
    font: 14px "Liberation Sans", sans-serif;
}

/* red markup on top of the screenshot */
.marks {
    position: absolute;
    left: 0;
    top: 0;
    width: 1137px;
    height: 500px;
}

.marks path {
    fill: #f00;
}

.marks .streak {
    fill: none;
    stroke: #f00;
    stroke-width: 7;
    stroke-linecap: round;
}

.note {
    position: absolute;
    left: 417px;
    top: 443px;
    color: #f00;
    font-size: 16px;
    line-height: 18px;
}
```
